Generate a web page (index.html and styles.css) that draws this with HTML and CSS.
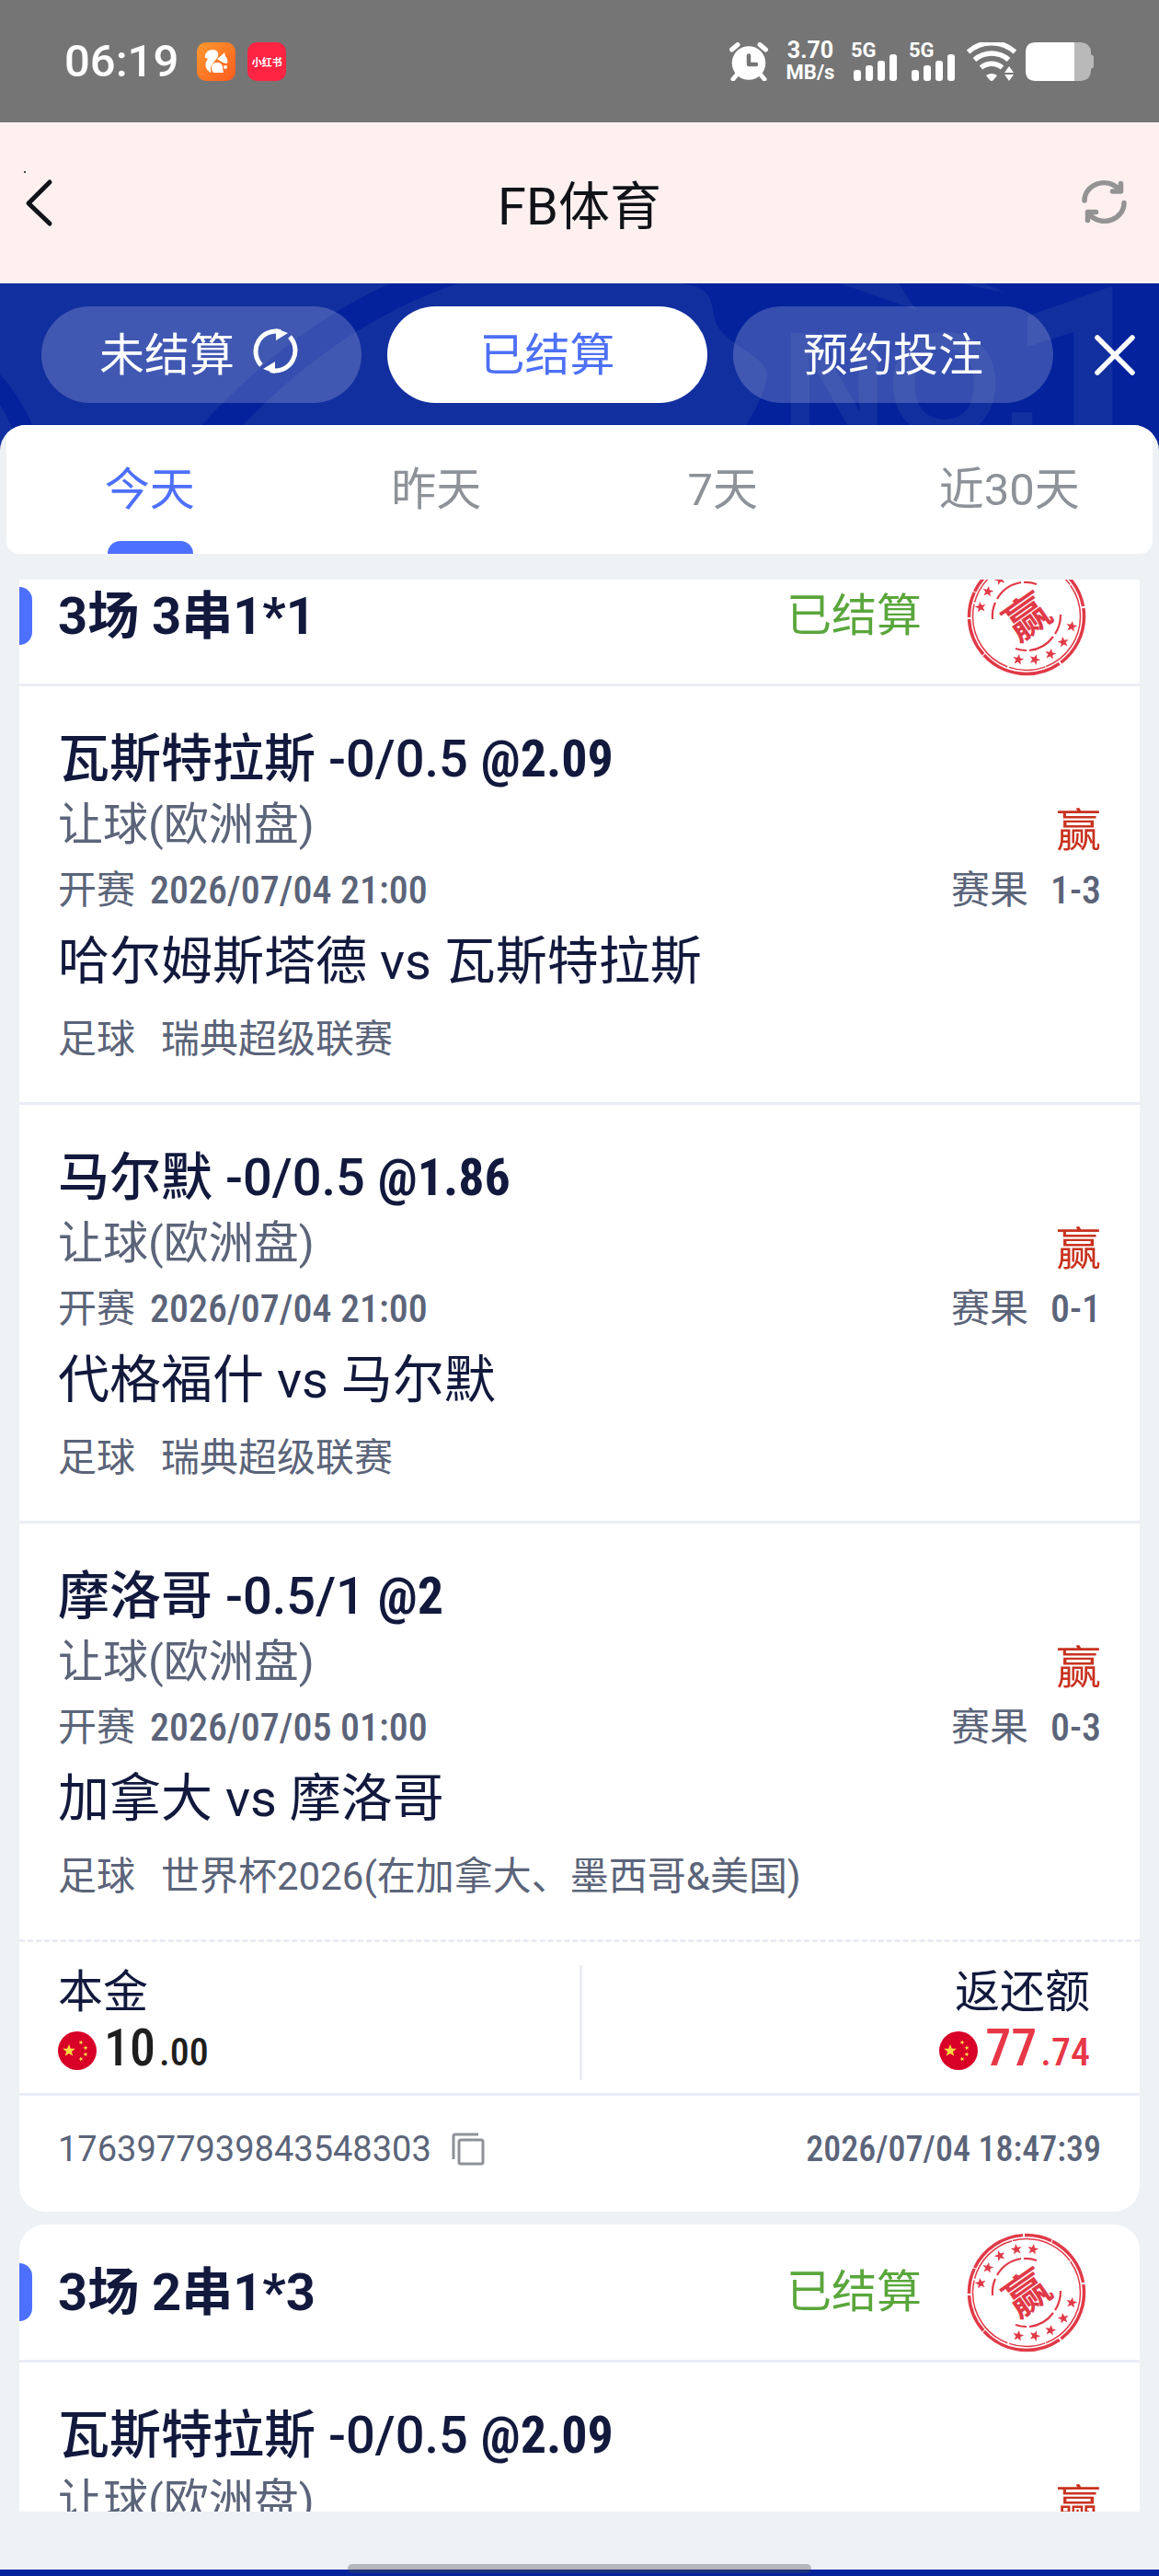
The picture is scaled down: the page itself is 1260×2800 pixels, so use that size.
FILE: index.html
```html
<!DOCTYPE html>
<html lang="zh-CN">
<head>
<meta charset="utf-8">
<meta name="viewport" content="width=device-width, initial-scale=1">
<title>FB体育</title>
<link rel="stylesheet" href="styles.css">
</head>
<body>
<svg class="defs" width="0" height="0" aria-hidden="true">
  <defs>
    <path id="star" d="M0-6 1.6-2 6-1.9 2.5 .8 3.7 5 0 2.5-3.7 5-2.5 .8-6-1.9-1.6-2Z"/>
    <symbol id="flag" viewBox="0 0 42 42">
      <circle cx="21" cy="21" r="21" fill="#d80027"/>
      <g fill="#ffda44">
        <use href="#star" transform="translate(12 21) scale(1.15)"/>
        <use href="#star" transform="translate(25 12) rotate(20) scale(.42)"/>
        <use href="#star" transform="translate(30 18) rotate(-10) scale(.42)"/>
        <use href="#star" transform="translate(30 25) rotate(10) scale(.42)"/>
        <use href="#star" transform="translate(25 30) rotate(-20) scale(.42)"/>
      </g>
    </symbol>
    <symbol id="stamp" viewBox="-65 -65 130 130">
      <g fill="none" stroke="#e03a48">
        <circle r="62.5" stroke-width="3.5" stroke-dasharray="58 2 90 1 42 2 28 1 66 2 30 1"/>
        <circle r="58.5" stroke-width="1.5" stroke-dasharray="70 1 40 2 84 2 60 1"/>
        <path d="M-37 3A37 37 0 0 1 -34-15M-32-19A37 37 0 0 1 -6-37M-3-37A37 37 0 0 1 11-35" stroke-width="2.2"/>
        <path d="M37-2A37 37 0 0 1 31 19M29 22A37 37 0 0 1 3 37M0 37A37 37 0 0 1 -12 35" stroke-width="2.2"/>
      </g>
      <g fill="#e03a48">
        <use href="#star" transform="translate(-50 -10) rotate(-10)"/>
        <use href="#star" transform="translate(-42 -27) rotate(10)"/>
        <use href="#star" transform="translate(-29 -40) rotate(-20)"/>
        <use href="#star" transform="translate(-11 -47) rotate(-10)"/>
        <use href="#star" transform="translate(7 -47) rotate(10)"/>
        <use href="#star" transform="translate(49 11) rotate(10)"/>
        <use href="#star" transform="translate(40 28) rotate(-10)"/>
        <use href="#star" transform="translate(26 41) rotate(10)"/>
        <use href="#star" transform="translate(9 47) rotate(20)"/>
        <use href="#star" transform="translate(-9 47) rotate(10)"/>
      </g>
      <text class="stamp-char" fill="#e03a48" transform="rotate(-35)" x="0" y="18" text-anchor="middle">赢</text>
    </symbol>
    <symbol id="signal" viewBox="0 0 53 42">
      <text class="signal-text" x="0" y="16">5G</text>
      <rect x="3" y="30" width="8" height="12" rx="3"/>
      <rect x="16" y="25" width="8" height="17" rx="3"/>
      <rect x="29" y="20" width="8" height="22" rx="3"/>
      <rect x="42" y="13" width="8" height="29" rx="3"/>
    </symbol>
  </defs>
</svg>

<div class="status">
  <span class="clock">06:19</span>
  <svg class="app" viewBox="0 0 42 42" aria-hidden="true">
    <defs><linearGradient id="uc" x1="0" y1="0" x2="1" y2="1"><stop offset="0" stop-color="#ff9a2e"/><stop offset="1" stop-color="#ff5a1f"/></linearGradient></defs>
    <rect width="42" height="42" rx="10" fill="url(#uc)"/>
    <path fill="#fff" d="M9 17C8 12 12 8 17 8c6 0 8 5 5 9-3 5-7 7-7 12 0 3 1 4 0 4C10 30 7 24 12 18c-1-1-2-1-3-1ZM22 18l5-4 3-3 1 4c2 2 3 5 2 8-3 0-7-2-11-5ZM16 28c0-4 2-6 6-6 4 0 6 2 6 6l1 5H18c-1-1-2-3-2-5Z"/>
    <circle cx="31" cy="27" r="2" fill="#fff"/>
  </svg>
  <span class="app app-red">小红书</span>
  <span class="status-space"></span>
  <svg width="42" height="42" viewBox="0 0 42 42" aria-label="闹钟">
    <g stroke="#fff" stroke-width="5" stroke-linecap="round"><path d="M2.500 8 9 2.500M33 2.500 39.500 8"/><path d="M9 34 4 40M33 34 38 40"/></g>
    <circle cx="21" cy="22.500" r="18.300" fill="#fff"/>
    <path d="M21 14.500V24h8" fill="none" stroke="#757575" stroke-width="4.500" stroke-linejoin="round" stroke-linecap="round"/>
  </svg>
  <span class="speed"><span class="speed-num">3.70</span><span class="speed-unit">MB/s</span></span>
  <svg class="signal" width="53" height="42"><use href="#signal"/></svg>
  <svg class="signal signal-second" width="53" height="42"><use href="#signal"/></svg>
  <svg class="wifi" width="54" height="42" viewBox="0 0 54 42" aria-label="Wi-Fi">
    <g fill="none" stroke="#fff" stroke-width="5.500"><path d="M1.500 10.500A38 38 0 0 1 52.500 10.500"/><path d="M8.500 19A28 28 0 0 1 45.500 19"/><path d="M15.500 27.500A18 18 0 0 1 38.500 27.500"/></g>
    <path fill="#fff" d="M21 36q6-4 12 0l-4 5q-2 2-4 0ZM41 33l5-7 5 7ZM41 35h10l-5 7Z"/>
  </svg>
  <svg class="battery" width="75" height="42" viewBox="0 0 75 42" aria-label="电量">
    <path fill="#b9b9b9" d="M53 0h7q11 1 11 11v2l3 2v12l-3 2v2q0 10-11 11h-7Z"/>
    <path fill="#fff" d="M11 0H53V42H11Q0 42 0 31V11Q0 0 11 0Z"/>
  </svg>
</div>

<header class="header">
  <button class="icon-btn" aria-label="返回">
    <svg width="49" height="70" viewBox="0 0 49 70"><circle cx="1" cy="2" r="1" fill="#111"/><path d="M28 13 5 36 28 58" fill="none" stroke="#101318" stroke-width="5" stroke-linecap="round" stroke-linejoin="round"/></svg>
  </button>
  <h1 class="title">FB体育</h1>
  <button class="icon-btn" aria-label="刷新">
    <svg width="49" height="49" viewBox="0 0 49 49" fill="none" stroke="#939393" stroke-width="5.500" stroke-linecap="round" stroke-linejoin="round"><path d="M3 23C3 6 26-4 41 11M42.500 4.500V13H33.500M46 25.500C46 43 23 53 8 38M6.500 44.500V35.500H15.500"/></svg>
  </button>
</header>

<main class="main">
  <svg class="backdrop" viewBox="0 0 1260 190" preserveAspectRatio="xMidYMin slice" aria-hidden="true">
    <rect width="1260" height="190" fill="#03229c"/>
    <path fill="#122f9f" d="M0 0H738C780 4 772 24 778 42C786 66 836 80 834 100C830 130 812 150 790 190H0Z"/>
    <path fill="#03229c" d="M188 190Q300 55 425 0H498Q350 50 232 190ZM0 99Q25 125 44 175H20Q12 150 0 132Z"/>
    <path fill="#122f9f" d="M913 0H977L996 29ZM1042 0H1070L1092 10Z"/>
    <g fill="#122f9f"><text class="mark" x="849" y="164">NO.</text><text class="mark mark-one" x="1092" y="218">1</text></g>
  </svg>

  <nav class="modes">
    <button class="pill">未结算
      <svg class="pill-icon" width="49" height="49" viewBox="0 0 49 49"><g fill="none" stroke="#fff" stroke-width="5"><path d="M9 40A22 22 0 0 1 30 3.500M40 9A22 22 0 0 1 19 45.500"/></g><path fill="#fff" d="M25 0 38 5 25 13ZM24 49 11 44 24 36Z"/></svg>
    </button>
    <button class="pill pill-active">已结算</button>
    <button class="pill">预约投注</button>
    <button class="close" aria-label="关闭"><svg width="44" height="44" viewBox="0 0 44 44"><path d="M3 3 41 41M41 3 3 41" stroke="#fff" stroke-width="5.500" stroke-linecap="round"/></svg></button>
  </nav>

  <section class="panel">
    <div class="days">
      <button class="day day-active">今天</button>
      <button class="day">昨天</button>
      <button class="day">7天</button>
      <button class="day">近30天</button>
    </div>

    <div class="list" id="list">
      <article class="card">
        <header class="card-head">
          <h2 class="card-title">3场 3串1*1</h2>
          <span class="settled">已结算</span>
          <svg class="stamp" width="130" height="130"><use href="#stamp"/></svg>
        </header>
        <section class="match">
          <h3 class="pick">瓦斯特拉斯 -0/0.5 <span class="odds">@2.09</span></h3>
          <div class="row bet"><span>让球(欧洲盘)</span><span class="win">赢</span></div>
          <div class="row time"><span>开赛</span><span class="num">2026/07/04 21:00</span><span class="score-label">赛果</span><span class="num score">1-3</span></div>
          <p class="teams">哈尔姆斯塔德 vs 瓦斯特拉斯</p>
          <p class="league"><span>足球</span><span>瑞典超级联赛</span></p>
        </section>
        <section class="match">
          <h3 class="pick">马尔默 -0/0.5 <span class="odds">@1.86</span></h3>
          <div class="row bet"><span>让球(欧洲盘)</span><span class="win">赢</span></div>
          <div class="row time"><span>开赛</span><span class="num">2026/07/04 21:00</span><span class="score-label">赛果</span><span class="num score">0-1</span></div>
          <p class="teams">代格福什 vs 马尔默</p>
          <p class="league"><span>足球</span><span>瑞典超级联赛</span></p>
        </section>
        <section class="match">
          <h3 class="pick">摩洛哥 -0.5/1 <span class="odds">@2</span></h3>
          <div class="row bet"><span>让球(欧洲盘)</span><span class="win">赢</span></div>
          <div class="row time"><span>开赛</span><span class="num">2026/07/05 01:00</span><span class="score-label">赛果</span><span class="num score">0-3</span></div>
          <p class="teams">加拿大 vs 摩洛哥</p>
          <p class="league"><span>足球</span><span>世界杯2026(在加拿大、墨西哥&amp;美国)</span></p>
        </section>
        <div class="totals">
          <div class="total">
            <span>本金</span>
            <span class="amount"><svg width="42" height="42"><use href="#flag"/></svg><span class="money"><b>10</b>.00</span></span>
          </div>
          <div class="total total-return">
            <span>返还额</span>
            <span class="amount amount-win"><svg width="42" height="42"><use href="#flag"/></svg><span class="money"><b>77</b>.74</span></span>
          </div>
        </div>
        <footer class="card-foot">
          <span class="order-id">1763977939843548303</span>
          <button class="copy" aria-label="复制单号"><svg width="36" height="36" viewBox="0 0 36 36" fill="none" stroke="#8e9297" stroke-width="3"><path d="M2 29V4q0-2 2-2H29"/><rect x="8" y="8" width="26" height="26" rx="2"/></svg></button>
          <span class="placed num">2026/07/04 18:47:39</span>
        </footer>
      </article>

      <article class="card">
        <header class="card-head">
          <h2 class="card-title">3场 2串1*3</h2>
          <span class="settled">已结算</span>
          <svg class="stamp" width="130" height="130"><use href="#stamp"/></svg>
        </header>
        <section class="match">
          <h3 class="pick">瓦斯特拉斯 -0/0.5 <span class="odds">@2.09</span></h3>
          <div class="row bet"><span>让球(欧洲盘)</span><span class="win">赢</span></div>
        </section>
      </article>
    </div>
  </section>
</main>
<div class="bottom"><span class="home-bar"></span></div>
<script src="app.js"></script>
</body>
</html>
```
FILE: styles.css
```css
* { box-sizing: border-box; }

body {
  margin: 0;
  height: 100vh;
  display: flex;
  flex-direction: column;
  font-family: Roboto, "Noto Sans CJK SC", sans-serif;
  font-size: 49px;
  color: #12193d;
  background: #eef2f5;
}

h1, h2, h3, p { margin: 0; font-weight: 400; }

button {
  border: 0;
  padding: 0;
  background: none;
  font: inherit;
  color: inherit;
  cursor: pointer;
}

svg { display: block; flex: none; }
.defs { position: absolute; }

/* Status bar */
.status {
  flex: none;
  height: 133px;
  padding: 0 70px;
  display: flex;
  align-items: center;
  background: #757575;
  color: #fff;
}
.clock { font-size: 49px; font-weight: 500; margin-right: 20px; }
.app { width: 42px; height: 42px; margin-right: 13px; }
.app-red {
  display: flex;
  align-items: center;
  justify-content: center;
  border-radius: 10px;
  background: #ff2442;
  font-size: 11px;
  font-weight: 700;
}
.status-space { flex: 1; }
.speed {
  width: 56px;
  margin: 0 16px 0 18px;
  display: flex;
  flex-direction: column;
  align-items: center;
  font-weight: 700;
}
.speed-num { font-size: 25px; line-height: 24px; }
.speed-unit { font-size: 22px; line-height: 24px; }
.signal { fill: #fff; }
.signal-text { font-size: 22px; font-weight: 700; }
.signal-second { margin: 0 10px; }
.battery { margin-left: 10px; }

/* Title bar */
.header {
  flex: none;
  height: 175px;
  padding: 0 35px 2px 26px;
  display: grid;
  grid-template-columns: 58px 1fr 49px;
  align-items: center;
  background: #fff0f0;
}
.title { font-size: 56px; color: #101318; text-align: center; }

/* Blue area */
.main {
  position: relative;
  flex: 1;
  min-height: 0;
  display: flex;
  flex-direction: column;
}
.backdrop { position: absolute; top: 0; left: 0; width: 100%; height: 190px; }
.mark { font: 700 160px "Liberation Sans", sans-serif; }
.mark-one { font: 700 300px Roboto, sans-serif; }

.modes {
  position: relative;
  flex: none;
  padding: 25px 26px 24px 45px;
  display: flex;
  align-items: center;
  gap: 28px;
  color: #fff;
}
.pill {
  flex: 1;
  height: 105px;
  padding-bottom: 8px;
  display: flex;
  align-items: center;
  justify-content: center;
  gap: 20px;
  border-radius: 53px;
  background: rgba(255, 255, 255, .2);
}
.pill-icon { margin-right: 6px; }
.pill-active { background: #fff; color: #4d70f5; }
.close { margin-left: 17px; }

/* Panel */
.panel {
  position: relative;
  flex: 1;
  min-height: 0;
  padding: 0 7px 63px;
  display: flex;
  flex-direction: column;
  overflow: hidden;
  border-radius: 28px 28px 0 0;
  background: #eef2f5;
}
.days {
  flex: none;
  height: 140px;
  display: grid;
  grid-template-columns: repeat(4, 1fr);
  border-radius: 14px;
  background: #fff;
  color: #8d9299;
}
.day { position: relative; padding-bottom: 10px; }
.day-active { color: #4d70ff; }
.day-active::after {
  content: "";
  position: absolute;
  bottom: 0;
  left: calc(50% - 46px);
  width: 93px;
  height: 14px;
  border-radius: 14px 14px 0 0;
  background: #4d70ff;
}

.list {
  flex: 1;
  min-height: 0;
  margin: 28px 14px 0;
  overflow-y: auto;
  scrollbar-width: none;
}

/* Bet card */
.card {
  margin-bottom: 14px;
  border-radius: 28px;
  background: #fff;
  overflow: hidden;
}
.card-head {
  height: 150px;
  padding-right: 58px;
  display: flex;
  align-items: center;
  border-bottom: 3px solid #eaedf5;
}
.card-head::before {
  content: "";
  width: 14px;
  height: 63px;
  margin-right: 28px;
  border-radius: 0 14px 14px 0;
  background: #4d70ff;
}
.card-title { flex: 1; font-size: 56px; font-weight: 700; line-height: 70px; }
.settled { margin-right: 49px; color: #5aa63c; line-height: 70px; }
.stamp-char { font-family: "Noto Sans CJK SC", sans-serif; font-size: 48px; font-weight: 700; }

.match { padding: 40px 42px 24px; color: #5b6479; }
.match + .match { border-top: 3px solid #eaedf5; }
.pick { font-size: 56px; font-weight: 500; line-height: 78px; color: #12193d; }
.odds, .num, .money { font-family: "Roboto Condensed", Roboto, sans-serif; font-weight: 500; }
.odds { font-weight: 700; }
.row { height: 70px; line-height: 70px; display: flex; }
.bet { line-height: 66px; }
.win { margin-left: auto; padding-top: 10px; line-height: 60px; color: #c8321f; }
.time, .league { font-size: 42px; }
.time { line-height: 68px; }
.time .num { margin-left: 16px; }
.score-label { margin-left: auto; }
.time .score { margin-left: 24px; }
.teams { font-size: 56px; line-height: 82px; color: #12193d; }
.league { display: flex; gap: 28px; line-height: 88px; }

.totals {
  height: 167px;
  padding: 25px 0 17px;
  display: grid;
  grid-template-columns: 1fr 1fr;
  border-top: 3px dashed #eaedf5;
}
.total {
  padding: 0 42px;
  display: flex;
  flex-direction: column;
  line-height: 60px;
}
.total-return { align-items: flex-end; padding-right: 54px; border-left: 3px solid #eaedf5; }
.amount { display: flex; align-items: center; gap: 8px; color: #1e1e1e; }
.amount-win { color: #e73848; }
.money { font-size: 42px; }
.money b { font-size: 56px; font-weight: 500; margin-right: 4px; }

.card-foot {
  height: 129px;
  padding: 0 42px 10px;
  display: flex;
  align-items: center;
  border-top: 3px solid #eaedf5;
  font-size: 38px;
  color: #5b6479;
}
.copy { margin-left: 22px; }

/* System navigation */
.bottom { position: relative; flex: none; height: 7px; background: #03229c; }
.home-bar {
  position: absolute;
  bottom: 3px;
  left: 30%;
  width: 40%;
  height: 10px;
  border-radius: 5px;
  background: rgba(74, 74, 74, .35);
}
.placed { margin-left: auto; }
```
FILE: app.js
```js
document.getElementById("list").scrollTop = 34;
```
